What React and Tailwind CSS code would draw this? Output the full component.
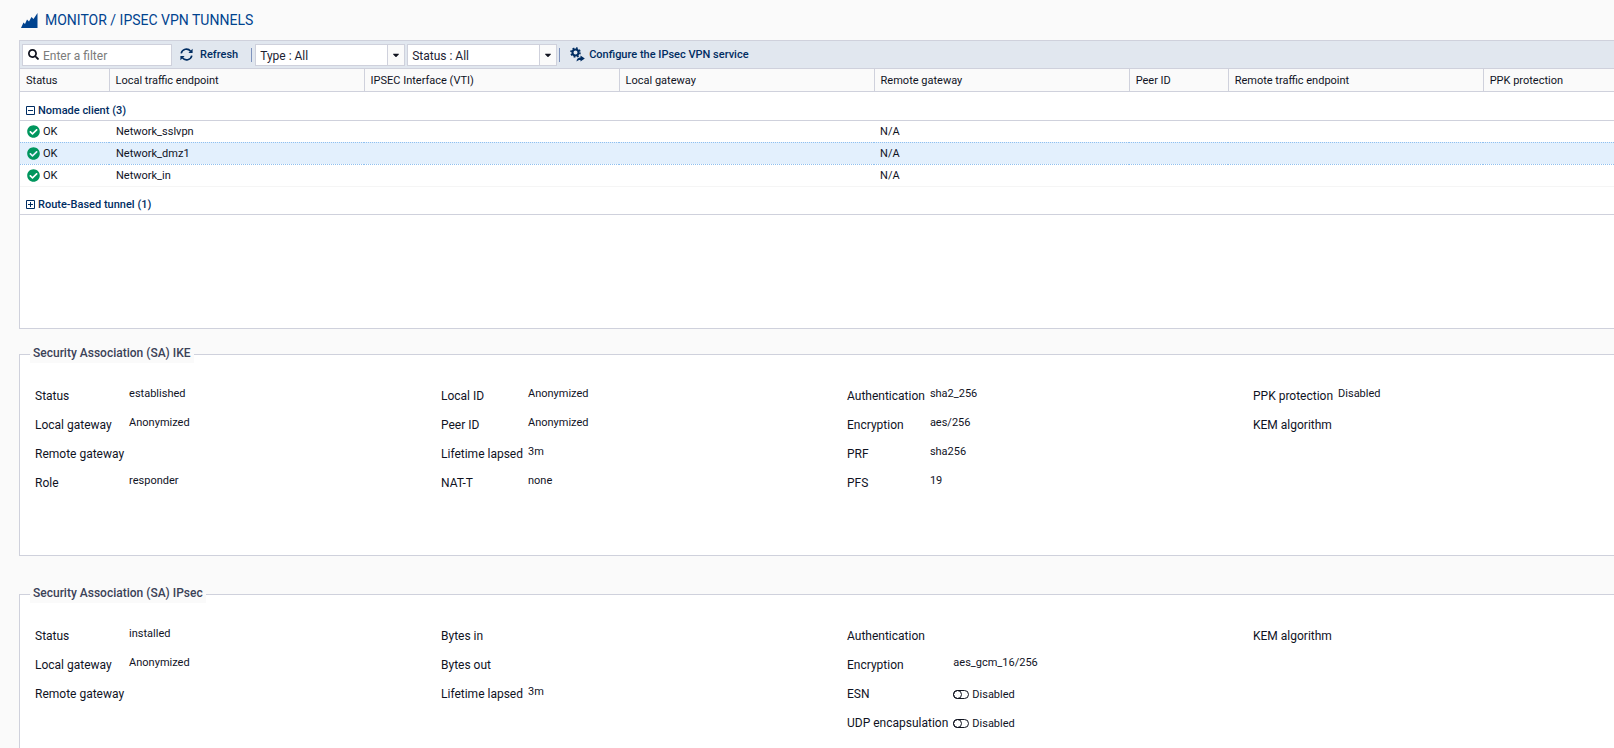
import { FaCaretDown, FaCheckCircle, FaSearch } from 'react-icons/fa';

const columns = [
  { label: 'Status', width: 'w-[89px]' },
  { label: 'Local traffic endpoint', width: 'w-[16%]' },
  { label: 'IPSEC Interface (VTI)', width: 'w-[16%]' },
  { label: 'Local gateway', width: 'w-[16%]' },
  { label: 'Remote gateway', width: 'w-[16%]' },
  { label: 'Peer ID', width: 'w-[99px]' },
  { label: 'Remote traffic endpoint', width: 'w-[16%]' },
  { label: 'PPK protection', width: 'w-auto' },
];

const tunnels = [
  { status: 'OK', local: 'Network_sslvpn', remoteGateway: 'N/A' },
  { status: 'OK', local: 'Network_dmz1', remoteGateway: 'N/A', selected: true },
  { status: 'OK', local: 'Network_in', remoteGateway: 'N/A' },
];

const ikeColumns = [
  [
    { label: 'Status', value: 'established' },
    { label: 'Local gateway', value: 'Anonymized' },
    { label: 'Remote gateway' },
    { label: 'Role', value: 'responder' },
  ],
  [
    { label: 'Local ID', value: 'Anonymized' },
    { label: 'Peer ID', value: 'Anonymized' },
    { label: 'Lifetime lapsed', value: '3m' },
    { label: 'NAT-T', value: 'none' },
  ],
  [
    { label: 'Authentication', value: 'sha2_256' },
    { label: 'Encryption', value: 'aes/256' },
    { label: 'PRF', value: 'sha256' },
    { label: 'PFS', value: '19' },
  ],
  [
    { label: 'PPK protection', value: 'Disabled' },
    { label: 'KEM algorithm' },
  ],
];

const ipsecColumns = [
  [
    { label: 'Status', value: 'installed' },
    { label: 'Local gateway', value: 'Anonymized' },
    { label: 'Remote gateway' },
  ],
  [
    { label: 'Bytes in' },
    { label: 'Bytes out' },
    { label: 'Lifetime lapsed', value: '3m' },
  ],
  [
    { label: 'Authentication' },
    { label: 'Encryption', value: 'aes_gcm_16/256' },
    { label: 'ESN', value: 'Disabled', toggle: true },
    { label: 'UDP encapsulation', value: 'Disabled', toggle: true },
  ],
  [{ label: 'KEM algorithm' }],
];

function ChartIcon() {
  return (
    <svg className="w-[17px] h-[15px]" viewBox="0 0 17 15" fill="#00438f" aria-hidden="true">
      <path d="M0 15 2.5 9.5 4 11 6 6.5 8 8.500 10.500 4 12.500 6 16.500 0V15Z" />
    </svg>
  );
}

function RefreshIcon() {
  return (
    <svg className="w-[13px] h-[13px]" viewBox="0 0 13 13" fill="none" stroke="currentColor" strokeWidth="1.6" aria-hidden="true">
      <path d="M1.2 5.4A5.3 5.3 0 0 1 10.6 3.2M11.8 7.6A5.3 5.3 0 0 1 2.4 9.8" />
      <path d="M12.6.8V5H8.4ZM.4 12.2V8h4.2Z" fill="currentColor" stroke="none" />
    </svg>
  );
}

function ConfigureIcon() {
  return (
    <svg className="w-[15px] h-[15px]" viewBox="0 0 15 15" fill="none" stroke="currentColor" aria-hidden="true">
      <circle cx="5.5" cy="5.5" r="3" strokeWidth="2" />
      <circle cx="5.5" cy="5.5" r="4.5" strokeWidth="1.6" strokeDasharray="1.77 1.76" />
      <path d="M6.5 14.5c.2-2.6 1.6-3.9 4-3.9V8.6l4.3 3-4.3 3v-1.7c-1.7-.1-3 .4-4 1.6Z" fill="currentColor" stroke="none" />
    </svg>
  );
}

function ToggleOffIcon() {
  return (
    <svg className="w-4 h-[9px]" viewBox="0 0 16 9" fill="none" stroke="currentColor" aria-hidden="true">
      <rect x="0.5" y="0.5" width="15" height="8" rx="4" />
      <circle cx="4.5" cy="4.5" r="4" />
    </svg>
  );
}

function GroupIcon({ open }) {
  return (
    <svg className="w-[9px] h-[9px]" viewBox="0 0 9 9" fill="none" stroke="currentColor" aria-hidden="true">
      <path d="M.5.5h8v8h-8ZM2 4.5h5" />
      {!open && <path d="M4.5 2v5" />}
    </svg>
  );
}

function FilterSelect({ label, options }) {
  return (
    <div className="relative flex w-[150px] h-[22px] bg-white border border-[#cfd1dc]">
      <select
        aria-label={label}
        className="appearance-none w-full h-full pt-0.5 pl-1 pr-7 text-xs text-[#1c2233] bg-transparent outline-none"
      >
        {options.map(option => (
          <option key={option}>{`${label} : ${option}`}</option>
        ))}
      </select>
      <span className="absolute inset-y-0 right-0 w-[17px] flex items-center justify-center border-l border-[#cfd1dc] bg-[#fafafa] pointer-events-none">
        <FaCaretDown className="w-[10px] h-[10px] text-[#10131f]" />
      </span>
    </div>
  );
}

function GroupRow({ title, open, className }) {
  return (
    <tr className="border-b border-[#cfd1dc]">
      <th colSpan={columns.length} scope="colgroup" className={`${className} px-1.5 pb-px align-bottom text-left`}>
        <button type="button" aria-expanded={open} className="flex items-center gap-[3px] leading-4 font-medium text-[#002d62]">
          <GroupIcon open={open} />
          {title}
        </button>
      </th>
    </tr>
  );
}

// the selected row is framed by a dotted line above and below
function rowBorder(index) {
  const framed = tunnels[index].selected || tunnels[index + 1]?.selected;
  return framed ? 'border-b border-dotted border-[#8fc0f0]' : 'border-b border-[#f5f5f5]';
}

function DetailPanel({ title, data, className }) {
  return (
    <fieldset className={`${className} min-w-0 pl-[15px] overflow-hidden bg-white border border-r-0 border-[#cfd1dc]`}>
      <legend className="-ml-[5px] px-[3px] h-[18px] text-xs leading-4 font-medium text-[#3c4257] bg-[#fafafa]">{title}</legend>
      <div className="grid grid-cols-4 -mr-[45px] pt-[19px]">
        {data.map(fields => (
          <dl key={fields[0].label} className="grid grid-cols-[auto_1fr] gap-x-[5px] auto-rows-[29px] content-start">
            {fields.map(field => (
              <div key={field.label} className="contents">
                <dt className="text-xs leading-[29px] whitespace-nowrap">{field.label}</dt>
                {field.toggle ? (
                  <dd className="flex items-center gap-[3px] text-[11px] leading-[29px]">
                    <ToggleOffIcon />
                    {field.value}
                  </dd>
                ) : (
                  <dd className="text-[11px] leading-6">{field.value}</dd>
                )}
              </div>
            ))}
          </dl>
        ))}
      </div>
    </fieldset>
  );
}

export default function App() {
  return (
    <main className="h-screen overflow-hidden pl-[19px] bg-[#fafafa] text-[#10131f] text-[11px] font-[Roboto,sans-serif]">
      <h1 className="flex items-center gap-[7px] h-10 pl-0.5 text-sm text-[#00438f]">
        <ChartIcon />
        MONITOR / IPSEC VPN TUNNELS
      </h1>

      <section className="h-[289px] bg-white border border-r-0 border-[#cfd1dc]">
        <div className="flex items-center h-7 pl-0.5 bg-[#e1e7ef] border-b border-[#cfd1dc]">
          <label className="flex items-center gap-1 w-[150px] h-[22px] px-[5px] bg-white border border-[#cfd1dc]">
            <FaSearch className="w-[11px] h-[11px]" />
            <input
              type="text"
              aria-label="Filter"
              placeholder="Enter a filter"
              className="min-w-0 flex-1 pt-0.5 text-xs outline-none placeholder:text-[#7b7b7b]"
            />
          </label>
          <button type="button" className="flex items-center gap-[7px] ml-2 font-medium text-[#002d62]">
            <RefreshIcon />
            <span className="pt-px">Refresh</span>
          </button>
          <span className="w-px h-3.5 ml-[13px] mr-[3px] bg-[#7f93bd]" />
          <FilterSelect label="Type" options={['All']} />
          <span className="w-0.5" />
          <FilterSelect label="Status" options={['All']} />
          <span className="w-px h-3.5 ml-0.5 bg-[#7f93bd]" />
          <button type="button" className="flex items-center gap-1 ml-2.5 font-medium text-[#002d62]">
            <ConfigureIcon />
            <span className="pt-px">Configure the IPsec VPN service</span>
          </button>
        </div>

        <table className="w-full table-fixed border-collapse">
          <thead>
            <tr className="h-[22px] bg-[#fafafa] border-b border-[#cfd1dc]">
              {columns.map(column => (
                <th
                  key={column.label}
                  scope="col"
                  className={`${column.width} pt-0.5 px-1.5 text-left font-normal whitespace-nowrap border-r border-[#cfd1dc] last:border-r-0`}
                >
                  {column.label}
                </th>
              ))}
            </tr>
          </thead>
          <tbody>
            <GroupRow title="Nomade client (3)" open className="h-[29px]" />
            {tunnels.map((tunnel, i) => (
              <tr key={tunnel.local} className={`h-[22px] ${rowBorder(i)} ${tunnel.selected ? 'bg-[#e3f0fd]' : ''}`}>
                <td className="pl-[7px]">
                  <span className="flex items-center gap-[3px]">
                    <FaCheckCircle className="w-[13px] h-[13px] text-[#00965e]" />
                    <span className="pt-0.5">{tunnel.status}</span>
                  </span>
                </td>
                <td className="pt-0.5 px-[7px]">{tunnel.local}</td>
                <td />
                <td />
                <td className="pt-0.5 px-1.5">{tunnel.remoteGateway}</td>
                <td />
                <td />
                <td />
              </tr>
            ))}
            <GroupRow title="Route-Based tunnel (1)" open={false} className="h-7" />
          </tbody>
        </table>
      </section>

      <DetailPanel title="Security Association (SA) IKE" data={ikeColumns} className="mt-4 h-[211px]" />
      <DetailPanel title="Security Association (SA) IPsec" data={ipsecColumns} className="mt-[29px] h-[211px]" />
    </main>
  );
}
